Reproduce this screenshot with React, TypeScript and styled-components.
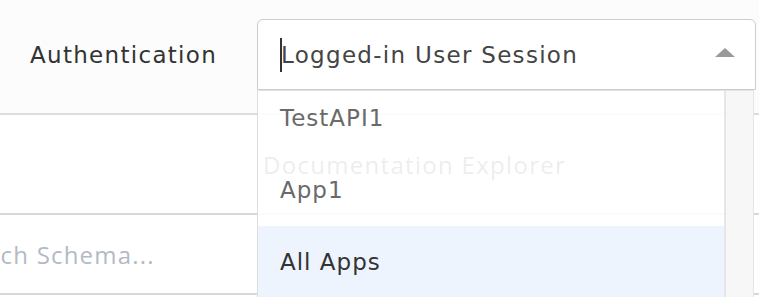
import styled, { createGlobalStyle } from "styled-components";

const GlobalStyle = createGlobalStyle`
  html, body {
    margin: 0;
    padding: 0;
    background: #ffffff;
    overflow: hidden;
  }
`;

const Page = styled.div`
  width: 759px;
  height: 297px;
  overflow: hidden;
  position: relative;
  background: #ffffff;
`;

const TopBar = styled.div`
  height: 115px;
  background: #fcfcfc;
  border-bottom: 2px solid #dcdcdc;
  display: flex;
  align-items: flex-start;
  padding-top: 19px;
  box-sizing: border-box;
`;

const Label = styled.div`
  width: 227px;
  padding-left: 30px;
  height: 71px;
  display: flex;
  align-items: center;
  font-family: "DejaVu Sans", sans-serif;
  font-size: 23px;
  letter-spacing: 1.3px;
  color: #333333;
`;

const SelectWrap = styled.div`
  position: relative;
  width: 499px;
`;

const SelectHead = styled.div`
  height: 71px;
  box-sizing: border-box;
  border: 1px solid #cccccc;
  border-radius: 6px 6px 0 0;
  background: #ffffff;
  display: flex;
  align-items: center;
  padding: 0 20px 0 22px;
`;

const Caret = styled.span`
  width: 2px;
  height: 34px;
  background: #333333;
  margin-right: -1px;
`;

const Value = styled.span`
  flex: 1;
  font-family: "DejaVu Sans", sans-serif;
  font-size: 23px;
  letter-spacing: 1.3px;
  color: #444444;
`;

const Arrow = styled.svg`
  width: 20px;
  height: 9px;
  margin-bottom: 4px;
`;

const Menu = styled.div`
  position: absolute;
  top: 71px;
  left: 0;
  width: 497px;
  height: 220px;
  display: flex;
  border-left: 1px solid #dddddd;
  border-right: 1px solid #e6e6e6;
  border-top: 1px solid #e4e4e4;
  box-sizing: border-box;
  background: rgba(255, 255, 255, 0.9);
`;

const List = styled.div`
  flex: 1;
  overflow: hidden;
`;

const Items = styled.div`
  margin-top: -9px;
`;

const Item = styled.div<{ $active?: boolean }>`
  height: 72px;
  display: flex;
  align-items: center;
  padding-left: 22px;
  font-family: "DejaVu Sans", sans-serif;
  font-size: 23px;
  letter-spacing: 1px;
  color: ${(p) => (p.$active ? "#333333" : "#6a6a6a")};
  background: ${(p) => (p.$active ? "rgba(236, 244, 253, 0.96)" : "transparent")};
`;

const Track = styled.div`
  width: 27px;
  border-left: 2px solid #e6e6e6;
  background: #f7f7f7;
`;

const DocHeader = styled.div`
  height: 98px;
  border-bottom: 2px solid #d8d8d8;
  display: flex;
  align-items: center;
  padding-left: 263px;
  font-family: "Open Sans", sans-serif;
  font-size: 24px;
  letter-spacing: 1.3px;
  color: #4a4a4a;
`;

const SearchRow = styled.div`
  height: 78px;
  border-bottom: 2px solid #d8d8d8;
  display: flex;
  align-items: center;
  overflow: hidden;
`;

const Placeholder = styled.span`
  font-family: "Open Sans", sans-serif;
  font-size: 24px;
  letter-spacing: 1.2px;
  color: #b3bac6;
  white-space: nowrap;
  text-indent: -54px;
`;

export default function App() {
  return (
    <>
      <GlobalStyle />
      <Page>
        <TopBar>
          <Label>Authentication</Label>
          <SelectWrap>
            <SelectHead>
              <Caret />
              <Value>Logged-in User Session</Value>
              <Arrow viewBox="0 0 20 9">
                <path d="M0 9 L10 0 L20 9 Z" fill="#9a9a9a" />
              </Arrow>
            </SelectHead>
            <Menu>
              <List>
                <Items>
                  <Item>TestAPI1</Item>
                  <Item>App1</Item>
                  <Item $active>All Apps</Item>
                </Items>
              </List>
              <Track />
            </Menu>
          </SelectWrap>
        </TopBar>
        <DocHeader>Documentation Explorer</DocHeader>
        <SearchRow>
          <Placeholder>Search Schema...</Placeholder>
        </SearchRow>
      </Page>
    </>
  );
}
